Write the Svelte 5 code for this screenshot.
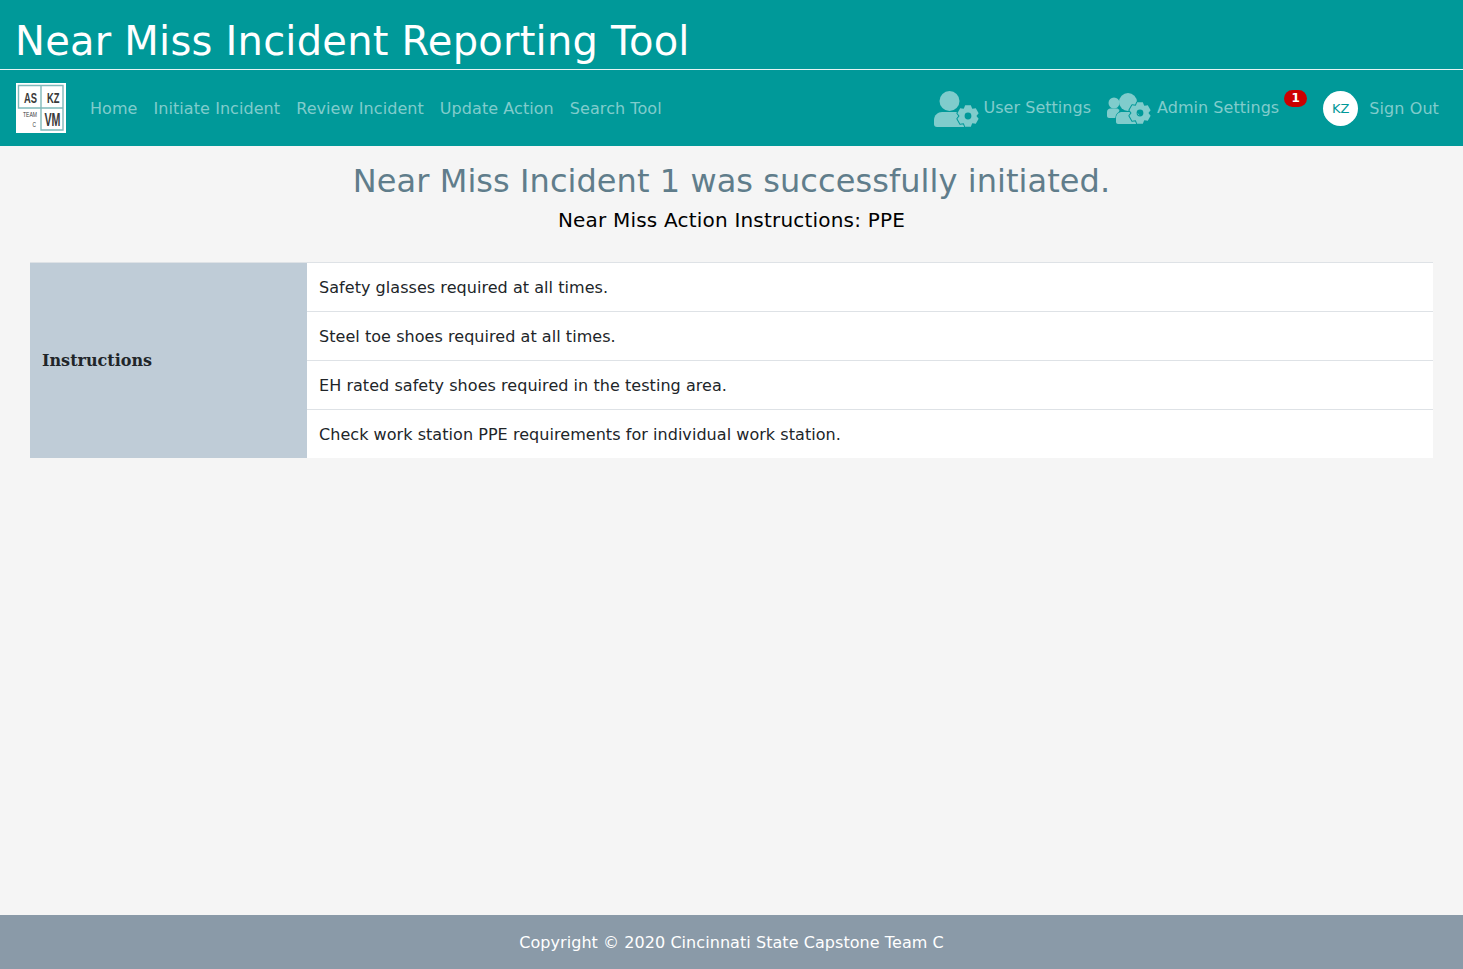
<script>
	const links = ['Home', 'Initiate Incident', 'Review Incident', 'Update Action', 'Search Tool'];
	const instructions = [
		'Safety glasses required at all times.',
		'Steel toe shoes required at all times.',
		'EH rated safety shoes required in the testing area.',
		'Check work station PPE requirements for individual work station.'
	];

	// six tooth cog, drawn around 0,0 with a round hole
	function gear(outer, inner, hole) {
		let d = '';
		for (let i = 0; i < 6; i++) {
			const a = (i * Math.PI) / 3 - Math.PI / 2;
			const pts = [
				[inner, a - 0.5],
				[outer, a - 0.26],
				[outer, a + 0.26],
				[inner, a + 0.5]
			];
			for (const [r, t] of pts) {
				d += `${d ? 'L' : 'M'}${(r * Math.cos(t)).toFixed(2)} ${(r * Math.sin(t)).toFixed(2)}`;
			}
		}
		d += `ZM${hole} 0A${hole} ${hole} 0 1 0 ${-hole} 0A${hole} ${hole} 0 1 0 ${hole} 0Z`;
		return d;
	}
	const gearPath = gear(11, 8.6, 3.4);
</script>

<div class="page">
	<header class="banner">
		<h1>Near Miss Incident Reporting Tool</h1>
	</header>

	<nav class="navbar">
		<svg class="logo" viewBox="0 0 50 50" aria-label="Team logo">
			<rect width="50" height="50" fill="#fff" />
			<path d="M2.500 2.500h22.500v22.500H2.500zM25 2.500h22v22.500H25zM25 25h22v22H25z" fill="none" stroke="#7fb9ba" stroke-width="1.400" />
			<text x="8" y="20" class="logo-big" textLength="13" lengthAdjust="spacingAndGlyphs">AS</text>
			<text x="31" y="20" class="logo-big" textLength="12.500" lengthAdjust="spacingAndGlyphs">KZ</text>
			<text x="28.500" y="43" class="logo-large" textLength="16" lengthAdjust="spacingAndGlyphs">VM</text>
			<text x="7" y="34" class="logo-small" textLength="14" lengthAdjust="spacingAndGlyphs">TEAM</text>
			<text x="16.500" y="44" class="logo-c" textLength="3.500" lengthAdjust="spacingAndGlyphs">C</text>
		</svg>

		<ul class="nav-links">
			{#each links as link}
				<li><a href="#top">{link}</a></li>
			{/each}
		</ul>

		<div class="nav-right">
			<a href="#top" class="nav-icon-link">
				<svg class="user-icon" viewBox="0 0 46 38">
					<circle cx="15.500" cy="12" r="10" fill="currentColor" />
					<path d="M0 35v-4c0-5 4-8 8-8h15c4 0 7 3 7 8v7H3c-2 0-3-1-3-3z" fill="currentColor" />
					<path class="cog" transform="translate(34 27)" d={gearPath} />
				</svg>
				<span>User Settings</span>
			</a>
			<a href="#top" class="nav-icon-link admin">
				<svg class="admin-icon" viewBox="0 0 46 34">
					<circle cx="7" cy="12" r="5.500" fill="currentColor" />
					<path d="M0 25v-4c0-2 1.500-3.500 3.500-3.500h7l2 1.500-3 8H2c-1 0-2-1-2-2z" fill="currentColor" />
					<circle cx="21" cy="11" r="9" fill="currentColor" />
					<path class="front-body" d="M9 31v-4c0-4 3-6 6-6h12c4 0 6 3 6 7v5H11c-1 0-2-1-2-2z" />
					<path class="cog" transform="translate(33 22)" d={gearPath} />
				</svg>
				<span>Admin Settings</span>
				<span class="badge">1</span>
			</a>
			<span class="avatar">KZ</span>
			<a href="#top" class="sign-out">Sign Out</a>
		</div>
	</nav>

	<main class="content">
		<h2>Near Miss Incident 1 was successfully initiated.</h2>
		<h5>Near Miss Action Instructions: PPE</h5>

		<table>
			<tbody>
				{#each instructions as item, i}
					<tr>
						{#if i === 0}
							<th rowspan={instructions.length}>Instructions</th>
						{/if}
						<td>{item}</td>
					</tr>
				{/each}
			</tbody>
		</table>
	</main>

	<footer>Copyright © 2020 Cincinnati State Capstone Team C</footer>
</div>

<style>
	:global(body) {
		margin: 0;
		background: #f5f5f5;
		font-family: 'DejaVu Sans', Verdana, sans-serif;
		color: #212529;
	}

	.page {
		min-height: 100vh;
		display: flex;
		flex-direction: column;
	}

	.banner {
		background: #009999;
		height: 69px;
		border-bottom: 1px solid #e6f4f4;
		padding: 0 15px;
		box-sizing: content-box;
	}

	h1 {
		margin: 0;
		padding-top: 17px;
		font-size: 40px;
		line-height: 48px;
		font-weight: 400;
		color: #fff;
		letter-spacing: 0.23px;
	}

	.navbar {
		background: #009999;
		height: 76px;
		display: flex;
		align-items: center;
		padding: 0 24px 0 16px;
	}

	.logo {
		width: 50px;
		height: 50px;
		margin-right: 16px;
		flex: none;
	}

	.logo text {
		font-family: 'Liberation Sans', sans-serif;
		fill: #3a3a3a;
	}

	.logo .logo-big {
		font-size: 15px;
		font-weight: 700;
	}

	.logo .logo-large {
		font-size: 18px;
		font-weight: 700;
	}

	.logo .logo-small {
		font-size: 7.500px;
	}

	.logo .logo-c {
		font-size: 8px;
	}

	.nav-links {
		list-style: none;
		display: flex;
		margin: 0;
		padding: 0;
	}

	.nav-links a,
	.nav-icon-link,
	.sign-out {
		color: #80cccc;
		text-decoration: none;
		font-size: 16px;
		letter-spacing: 0.03px;
	}

	.nav-links a {
		letter-spacing: 0.065px;
	}

	.sign-out {
		letter-spacing: 0.1px;
	}

	.nav-links a {
		display: block;
		padding: 8px;
	}

	.nav-right {
		margin-left: auto;
		display: flex;
		align-items: center;
	}

	.nav-icon-link {
		display: flex;
		align-items: center;
		position: relative;
	}

	.nav-icon-link span:not(.badge) {
		margin-top: -2px;
	}

	.cog {
		fill: currentColor;
		fill-rule: evenodd;
		stroke: #009999;
		stroke-width: 2;
		paint-order: stroke;
		stroke-linejoin: round;
	}

	.front-body {
		fill: currentColor;
		stroke: #009999;
		stroke-width: 1.500;
		paint-order: stroke;
	}

	.user-icon {
		width: 46px;
		height: 38px;
		margin-right: 4px;
	}

	.admin {
		margin-left: 16px;
		margin-right: 44px;
	}

	.admin-icon {
		width: 46px;
		height: 34px;
		margin-right: 4px;
	}

	.badge {
		position: absolute;
		right: -28px;
		top: -1px;
		background: #cc0000;
		color: #fff;
		width: 23px;
		height: 17px;
		border-radius: 9px;
		font-size: 12px;
		font-weight: 700;
		line-height: 17px;
		text-align: center;
		letter-spacing: 0;
	}

	.avatar {
		width: 35px;
		height: 35px;
		border-radius: 50%;
		background: #fff;
		color: #009999;
		font-size: 13px;
		line-height: 36px;
		text-align: center;
		margin-right: 11px;
	}

	.content {
		flex: 1;
		padding: 0 30px;
		text-align: center;
	}

	h2 {
		margin: 15px 0 0;
		font-size: 32px;
		line-height: 40px;
		font-weight: 400;
		color: #607d8b;
		letter-spacing: 0.06px;
	}

	h5 {
		margin: 7px 0 0;
		font-size: 20px;
		line-height: 24px;
		font-weight: 400;
		color: #000;
		letter-spacing: 0.2px;
	}

	table {
		width: 100%;
		margin-top: 30px;
		border-collapse: collapse;
		text-align: left;
		font-size: 16px;
		letter-spacing: 0.05px;
	}

	th {
		width: 253px;
		padding: 12px;
		background: #bfccd7;
		border-top: 1px solid #dee2e6;
		font-family: 'DejaVu Serif', serif;
		font-weight: 700;
		font-size: 16px;
		letter-spacing: 0;
	}

	td {
		padding: 13px 12px 11px;
		line-height: 24px;
		background: #fff;
		border-top: 1px solid #dee2e6;
	}

	footer {
		background: #8a9aa8;
		height: 54px;
		line-height: 56px;
		text-align: center;
		color: #fff;
		font-size: 16px;
		letter-spacing: 0.06px;
	}
</style>
